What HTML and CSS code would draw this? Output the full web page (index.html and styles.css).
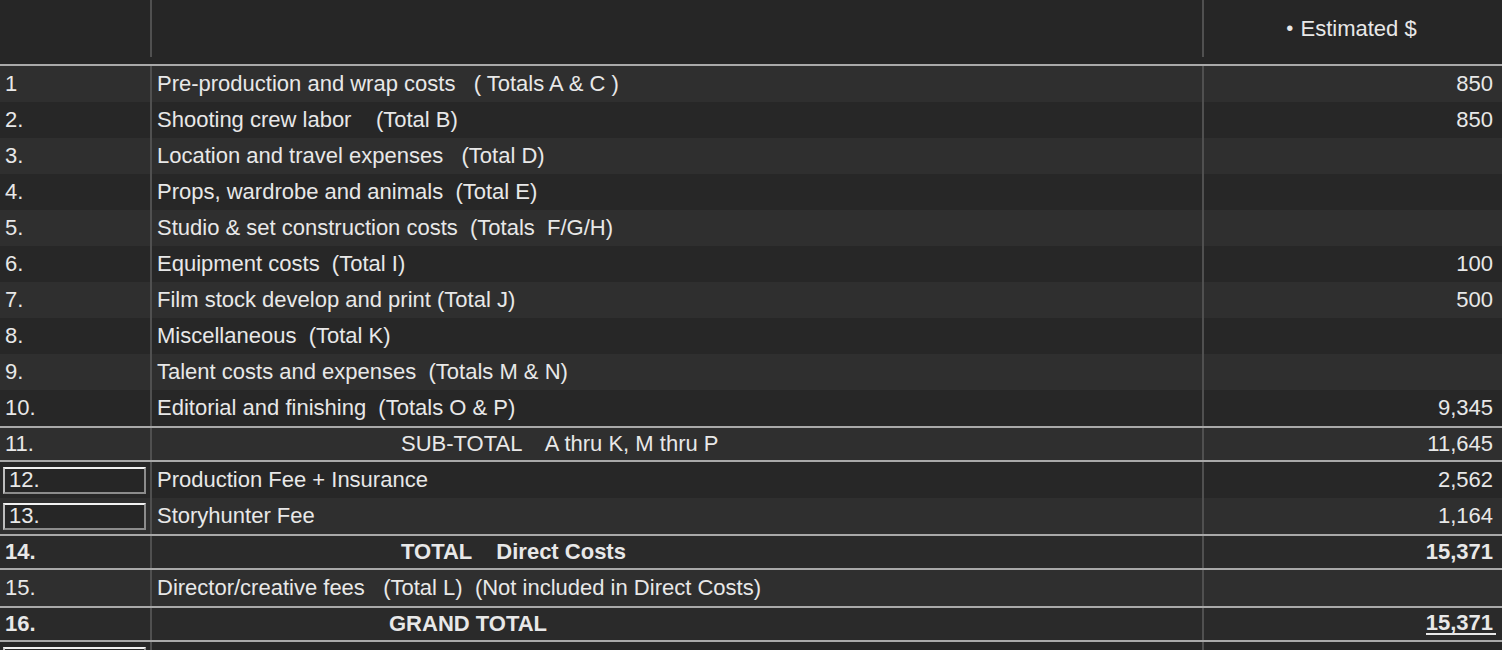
FILE: index.html
```html
<!DOCTYPE html>
<html>
<head>
<meta charset="utf-8">
<link rel="stylesheet" href="styles.css">
</head>
<body>
<div class="sheet">
  <div class="row head">
    <div class="c1"></div>
    <div class="c2"></div>
    <div class="c3"><span class="dot">•</span> Estimated $</div>
  </div>
  <div class="row odd"><div class="c1">1</div><div class="c2">Pre-production and wrap costs   ( Totals A &amp; C )</div><div class="c3">850</div></div>
  <div class="row even"><div class="c1">2.</div><div class="c2">Shooting crew labor    (Total B)</div><div class="c3">850</div></div>
  <div class="row odd"><div class="c1">3.</div><div class="c2">Location and travel expenses   (Total D)</div><div class="c3"></div></div>
  <div class="row even"><div class="c1">4.</div><div class="c2">Props, wardrobe and animals  (Total E)</div><div class="c3"></div></div>
  <div class="row odd"><div class="c1">5.</div><div class="c2">Studio &amp; set construction costs  (Totals  F/G/H)</div><div class="c3"></div></div>
  <div class="row even"><div class="c1">6.</div><div class="c2">Equipment costs  (Total I)</div><div class="c3">100</div></div>
  <div class="row odd"><div class="c1">7.</div><div class="c2">Film stock develop and print (Total J)</div><div class="c3">500</div></div>
  <div class="row even"><div class="c1">8.</div><div class="c2">Miscellaneous  (Total K)</div><div class="c3"></div></div>
  <div class="row odd"><div class="c1">9.</div><div class="c2">Talent costs and expenses  (Totals M &amp; N)</div><div class="c3"></div></div>
  <div class="row even ruled"><div class="c1">10.</div><div class="c2">Editorial and finishing  (Totals O &amp; P)</div><div class="c3">9,345</div></div>
  <div class="row odd ruled short"><div class="c1">11.</div><div class="c2 indent">SUB-TOTAL    A thru K, M thru P</div><div class="c3">11,645</div></div>
  <div class="row even"><div class="c1 boxed"><div class="box">12.</div></div><div class="c2">Production Fee + Insurance</div><div class="c3">2,562</div></div>
  <div class="row odd ruled"><div class="c1 boxed"><div class="box">13.</div></div><div class="c2">Storyhunter Fee</div><div class="c3">1,164</div></div>
  <div class="row mid ruled short bold"><div class="c1">14.</div><div class="c2 indent">TOTAL    Direct Costs</div><div class="c3">15,371</div></div>
  <div class="row odd ruled"><div class="c1">15.</div><div class="c2">Director/creative fees   (Total L)  (Not included in Direct Costs)</div><div class="c3"></div></div>
  <div class="row mid ruled short bold"><div class="c1">16.</div><div class="c2 indent2">GRAND TOTAL</div><div class="c3"><span class="ul">15,371</span></div></div>
  <div class="row even"><div class="c1 boxed"><div class="box"></div></div><div class="c2"></div><div class="c3"></div></div>
</div>
</body>
</html>
```

FILE: styles.css
```css
html, body {
  margin: 0;
  padding: 0;
  background: #262626;
  overflow: hidden;
}
body {
  font-family: "Liberation Sans", Arial, Helvetica, sans-serif;
  font-size: 22px;
  color: #e8e8e8;
}
.sheet {
  width: 1502px;
}
.row {
  display: grid;
  grid-template-columns: 150px 1052px 300px;
  height: 36px;
}
.row > div {
  display: flex;
  align-items: center;
  white-space: pre;
  overflow: hidden;
  box-sizing: border-box;
}
.c1 {
  padding-left: 5px;
}
.c2 {
  border-left: 2px solid #505050;
  padding-left: 5px;
}
.c3 {
  border-left: 2px solid #505050;
  justify-content: flex-end;
  padding-right: 9px;
}
.odd { background: #2f2f2f; }
.even { background: #272727; }
.mid { background: #2a2a2a; }
.ruled { border-bottom: 2px solid #a9a9a9; }
.short { height: 32px; }
.bold { font-weight: bold; }

.head {
  height: 64px;
  background: #262626;
  border-bottom: 2px solid #a9a9a9;
}
.head > div {
  height: 57px;
  align-self: start;
}
.head .c3 {
  justify-content: center;
  padding-right: 3px;
  padding-left: 0;
}
.dot {
  font-size: 20px;
  margin-right: 1px;
}
.indent { padding-left: 249px; }
.indent2 { padding-left: 237px; }

.boxed { padding-left: 0; }
.box {
  margin-left: 3px;
  width: 143px;
  height: 27px;
  box-sizing: border-box;
  border: 2px solid #8c8c8c;
  border-top-color: #f2f2f2;
  border-left-color: #bdbdbd;
  background: #262626;
  padding-left: 4px;
  display: flex;
  align-items: center;
}
.ul {
  display: inline-block;
  line-height: 20px;
  border-bottom: 2px solid #e8e8e8;
  padding-right: 3px;
  margin-right: -3px;
}
```
